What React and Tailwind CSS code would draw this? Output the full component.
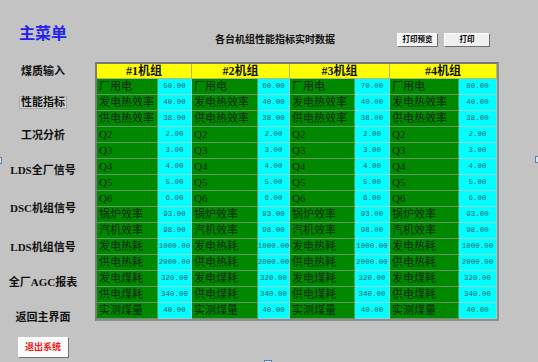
import React from 'react'

const labels = ['厂用电', '发电热效率', '供电热效率', 'Q2', 'Q3', 'Q4', 'Q5', 'Q6', '锅炉效率', '汽机效率', '发电热耗', '供电热耗', '发电煤耗', '供电煤耗', '实测煤量']
const common = ['40.00', '38.00', '2.00', '3.00', '4.00', '5.00', '6.00', '93.00', '98.00', '1000.00', '2000.00', '320.00', '340.00', '40.00']
const units = [
  { name: '#1机组', first: '50.00' },
  { name: '#2机组', first: '60.00' },
  { name: '#3机组', first: '70.00' },
  { name: '#4机组', first: '80.00' },
]

const menu = [
  { text: '煤质输入', h: 'h-[38px]' },
  { text: '性能指标', h: 'h-[25px]', active: true },
  { text: '工况分析', h: 'h-[40px]' },
  { text: 'LDS全厂信号', h: 'h-[30px]' },
  { text: 'DSC机组信号', h: 'h-[46px]' },
  { text: 'LDS机组信号', h: 'h-[32px]' },
  { text: '全厂AGC报表', h: 'h-[38px]' },
  { text: '返回主界面', h: 'h-[32px]' },
]

const serif = { fontFamily: '"Liberation Serif", "Noto Sans CJK SC", serif' }
const mono = { fontFamily: '"Liberation Mono", monospace' }

export default function App() {
  return (
    <div className="relative flex h-[362px] w-[538px] overflow-hidden bg-[#c3c3c3]" style={serif}>
      {/* left menu */}
      <div className="flex w-[86px] flex-col items-center pt-[15px]">
        <div className="flex h-[37px] items-center text-[16px] font-bold text-[#2222ee]">主菜单</div>
        {menu.map((m) => (
          <div key={m.text} className={`flex ${m.h} items-center`}>
            <span
              className={
                m.active
                  ? 'border border-[#a8a8a8] bg-[#cfcfcf] px-[1px] text-[11px] font-bold leading-[11px] text-[#111]'
                  : 'text-[11px] font-bold leading-[11px] text-[#111]'
              }
            >
              {m.text}
            </span>
          </div>
        ))}
        <button className="mt-[4px] flex h-[21px] w-[51px] items-center justify-center border border-t-white border-l-white border-r-[#707070] border-b-[#707070] bg-[#fbfbfb] text-[9px] font-bold text-[#f21818]">
          退出系统
        </button>
      </div>

      {/* right content */}
      <div className="flex flex-col pl-[9px] pt-[33px]">
        <div className="flex h-[14px] items-center">
          <div className="ml-[120px] w-[120px] text-[10px] font-bold leading-[14px] text-[#111]">各台机组性能指标实时数据</div>
          <button className="ml-[62px] flex h-[14px] w-[41px] items-center justify-center border border-t-white border-l-white border-r-[#707070] border-b-[#707070] bg-[#f4f4f4] text-[7.5px] font-bold text-black">
            打印预览
          </button>
          <button className="ml-[6px] flex h-[14px] w-[46px] items-center justify-center border border-t-white border-l-white border-r-[#707070] border-b-[#707070] bg-[#f0f0f0] text-[7.5px] font-bold text-black">
            打印
          </button>
        </div>

        <div className="mt-[15px] w-[404px] border-2 border-t-[#7a7a7a] border-l-[#7a7a7a] border-r-[#8c8c8c] border-b-[#8c8c8c]">
          <div className="grid grid-cols-[61px_34px_66px_32px_65px_35px_69px_38px]">
            {units.map((u) => (
              <div
                key={u.name}
                className="col-span-2 flex h-[15px] items-center justify-center border-r border-b border-[#b8b86a] bg-[#ffff00] text-[12px] font-bold leading-[12px] text-[#111]"
              >
                {u.name}
              </div>
            ))}
            {labels.map((label, i) =>
              units.map((u) => (
                <React.Fragment key={u.name + label}>
                  <div className="flex h-[16px] items-center border-r border-b border-[#5f9a5f] bg-[#008800] pl-[2px] text-[11px] leading-[11px] text-[#0c2a0c]">
                    {label}
                  </div>
                  <div
                    className="flex h-[16px] items-center justify-center border-r border-b border-[#8fd4d4] bg-[#00ffff] text-[7.5px] text-[#2a5c6a]"
                    style={mono}
                  >
                    {i === 0 ? u.first : common[i - 1]}
                  </div>
                </React.Fragment>
              ))
            )}
          </div>
        </div>
      </div>

      {/* selection handles */}
      <div className="absolute left-[-4px] top-[157px] h-[7px] w-[6px] border border-[#5a7ea8] bg-[#cfe4fa]" />
      <div className="absolute right-[-4px] top-[156px] h-[7px] w-[7px] border border-[#5a7ea8] bg-[#cfe4fa]" />
      <div className="absolute bottom-[-4px] left-[264px] h-[6px] w-[8px] border border-[#5a7ea8] bg-[#cfe4fa]" />
    </div>
  )
}
